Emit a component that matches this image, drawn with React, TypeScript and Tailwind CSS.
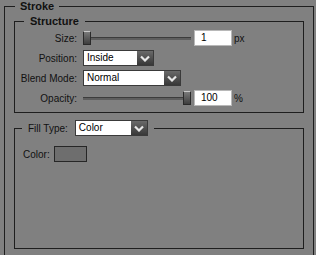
import React from 'react';

const Chevron = () => (
  <svg width="10" height="7" viewBox="0 0 10 7">
    <path d="M1 1.5 L5 5.5 L9 1.5" fill="none" stroke="#e8e8e8" strokeWidth="2.2" />
  </svg>
);

const Select = ({ value, width }: { value: string; width: string }) => (
  <div className={`flex h-[16px] ${width} border border-[#3a3a3a] bg-white`}>
    <span className="flex-1 pl-[3px] leading-[14px] text-black">{value}</span>
    <span className="flex w-[16px] items-center justify-center bg-gradient-to-b from-[#6a6a6a] to-[#383838]">
      <Chevron />
    </span>
  </div>
);

const Slider = ({ left }: { left: boolean }) => (
  <div className={`flex h-[16px] w-[108px] items-center ${left ? '' : 'flex-row-reverse'}`}>
    <div className="h-[14px] w-[8px] border border-[#2a2a2a] border-t-[#c8c8c8] bg-gradient-to-b from-[#7a7a7a] to-[#3e3e3e]" />
    <div className="h-[3px] flex-1 border-t border-[#3c3c3c] bg-[#5e5e5e]" />
  </div>
);

const NumberBox = ({ value }: { value: string }) => (
  <div className="ml-[3px] h-[16px] w-[38px] border border-[#b8b8b8] bg-white pl-[6px] leading-[14px] text-black">
    {value}
  </div>
);

const Row = ({ label, children }: { label: string; children: React.ReactNode }) => (
  <div className="flex h-[16px] items-center">
    <span className="w-[63px] pr-px text-right">{label}</span>
    <div className="ml-[5px] flex items-center">{children}</div>
  </div>
);

export default function App() {
  return (
    <div
      className="h-[255px] w-[316px] overflow-hidden bg-[#808080] pl-1 pr-[2px] text-[10px] text-[#111]"
      style={{ fontFamily: '"Liberation Sans", Arial, sans-serif' }}
    >
      <fieldset className="h-[280px] border border-[#1e1e1e] px-[9px] pt-[2px]">
        <legend className="ml-px px-[5px] text-[11px] font-bold leading-[13px]">Stroke</legend>

        <fieldset className="border border-[#1e1e1e] pb-[6px]">
          <legend className="ml-[9px] px-[6px] text-[11px] font-bold leading-[13px]">Structure</legend>
          <div className="flex flex-col gap-[4px] pt-[2px]">
            <Row label="Size:">
              <Slider left />
              <NumberBox value="1" />
              <span className="ml-[2px]">px</span>
            </Row>
            <Row label="Position:">
              <Select value="Inside" width="w-[71px]" />
            </Row>
            <Row label="Blend Mode:">
              <Select value="Normal" width="w-[98px]" />
            </Row>
            <Row label="Opacity:">
              <Slider left={false} />
              <NumberBox value="100" />
              <span className="ml-[2px]">%</span>
            </Row>
          </div>
        </fieldset>

        <fieldset className="mt-[7px] h-[129px] border border-[#1e1e1e]">
          <legend className="ml-[7px] flex items-center gap-[7px] px-[6px]">
            <span>Fill Type:</span>
            <Select value="Color" width="w-[73px]" />
          </legend>
          <div className="mt-[10px] flex items-center gap-[4px] pl-[8px]">
            <span>Color:</span>
            <div className="h-[16px] w-[33px] border border-[#262626] bg-[#6e6e6e]" />
          </div>
        </fieldset>
      </fieldset>
    </div>
  );
}
